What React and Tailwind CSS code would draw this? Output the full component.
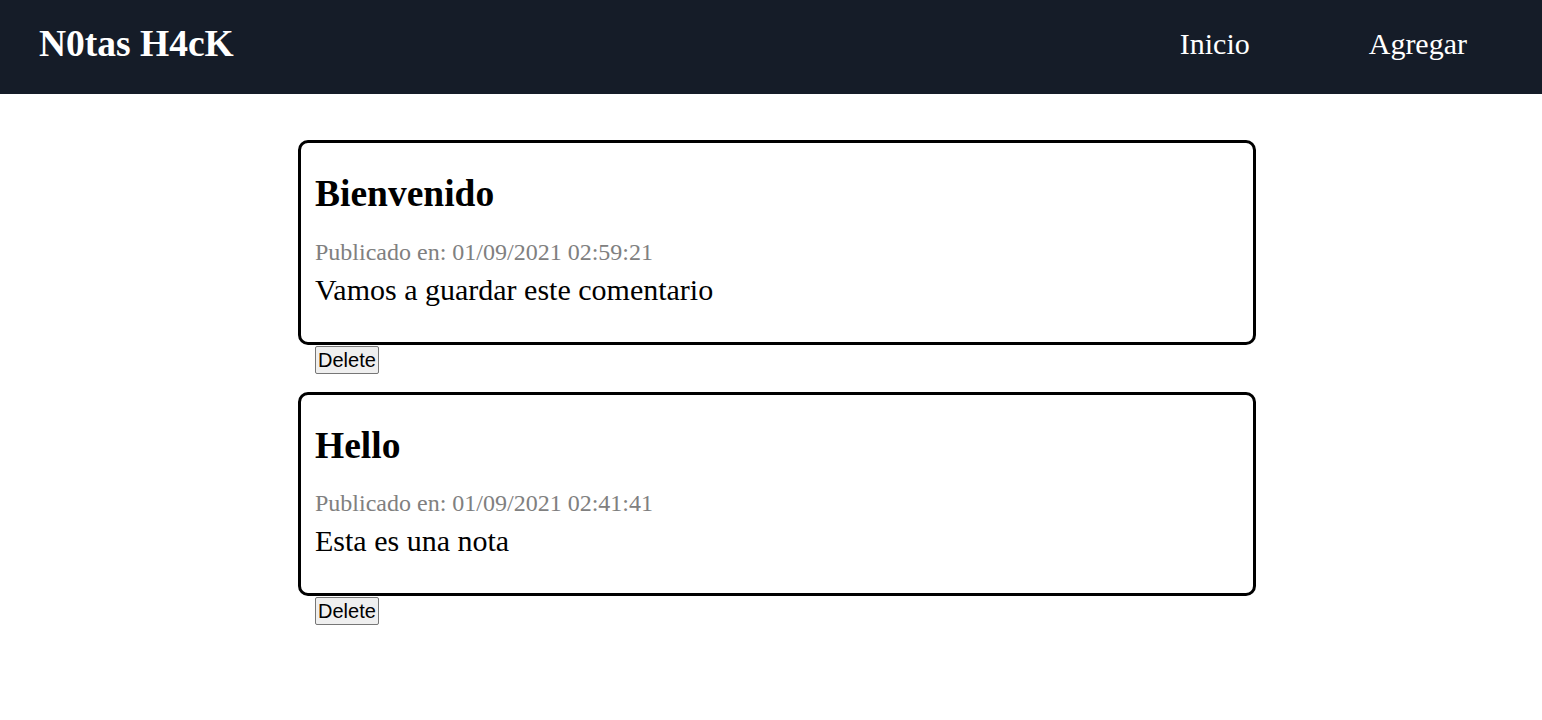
export default function App() {
  const notes = [
    { title: "Bienvenido", date: "01/09/2021 02:59:21", body: "Vamos a guardar este comentario" },
    { title: "Hello", date: "01/09/2021 02:41:41", body: "Esta es una nota" },
  ];
  return (
    <div className="min-h-[720px] bg-white" style={{ fontFamily: '"Liberation Serif", "Times New Roman", serif' }}>
      <header className="h-[94px] bg-[#151c28] flex items-center justify-between pl-[39px] pr-[75px]">
        <h1 className="text-[37.5px] font-bold text-white leading-none -mt-[6px]">N0tas H4cK</h1>
        <nav className="flex items-center gap-[119px] -mt-[6px]">
          <a className="text-[30px] text-white leading-none">Inicio</a>
          <a className="text-[30px] text-white leading-none">Agregar</a>
        </nav>
      </header>
      <main className="pt-[46px] pl-[298px]">
        {notes.map((n, i) => (
          <div key={i} className={i > 0 ? "mt-[18px]" : ""}>
            <div className="w-[958px] border-[3px] border-black rounded-[10px] pt-[32px] pb-[37px] pl-[14px] pr-[15px]">
              <h2 className="text-[37.5px] font-bold leading-none text-black">{n.title}</h2>
              <p className="mt-[27px] text-[24px] leading-none text-[#808080]">Publicado en: {n.date}</p>
              <p className="mt-[11px] text-[30px] leading-none text-black">{n.body}</p>
            </div>
            <button
              className="ml-[17px] mt-px block text-[20px] leading-[22px] px-[2px] py-[2px] border border-[#767676] bg-[#efefef] rounded-[2px] text-black"
              style={{ fontFamily: '"Liberation Sans", Arial, sans-serif' }}
            >
              Delete
            </button>
          </div>
        ))}
      </main>
    </div>
  );
}
